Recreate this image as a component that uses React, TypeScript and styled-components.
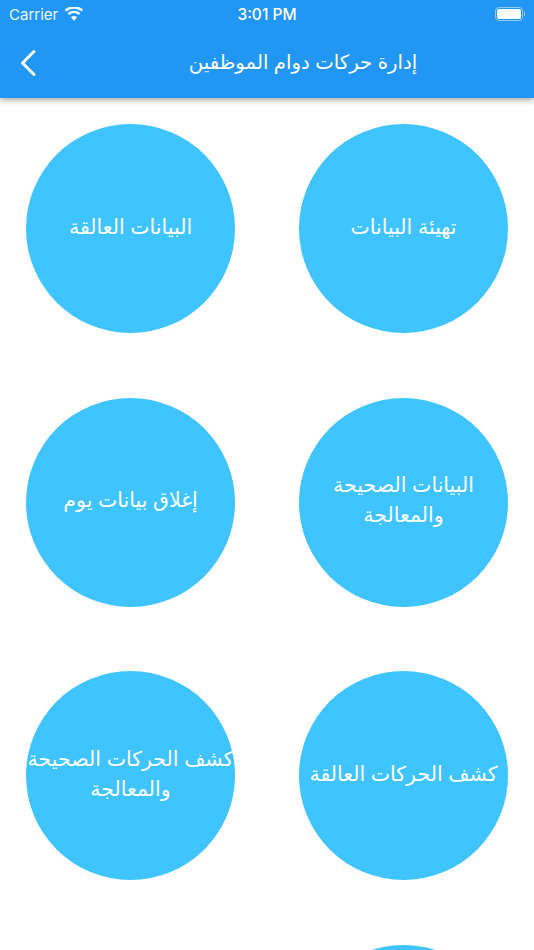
import React from 'react';
import styled, {createGlobalStyle} from "styled-components";

const items = [
    'تهيئة البيانات',
    'البيانات العالقة',
    'البيانات الصحيحة\nوالمعالجة',
    'إغلاق بيانات يوم',
    'كشف الحركات العالقة',
    'كشف الحركات الصحيحة\nوالمعالجة',
    '',
];

export default function App() {
    return (
        <Screen>
            <GlobalStyle/>
            <Header>
                <StatusBar>
                    <Carrier>
                        Carrier
                        <svg width="20" height="15" viewBox="0 0 20 14">
                            <path fill="#fff" d="M10 13.5 6.9 9.6a5 5 0 0 1 6.2 0L10 13.5zM5.2 7.5 3.6 5.5a10.2 10.2 0 0 1 12.8 0l-1.6 2a7.7 7.7 0 0 0-9.6 0zM2.4 4 .8 2a14.7 14.7 0 0 1 18.4 0l-1.6 2a12.2 12.2 0 0 0-15.2 0z"/>
                        </svg>
                    </Carrier>
                    <Time>3:01 PM</Time>
                    <BatteryWrap>
                        <Battery><BatteryFill/></Battery>
                        <BatteryNub/>
                    </BatteryWrap>
                </StatusBar>
                <TitleBar>
                    <BackButton>
                        <svg width="18" height="28" viewBox="0 0 18 28">
                            <path d="M15 2.5 3.5 14 15 25.5" fill="none" stroke="#fff" strokeWidth="3" strokeLinecap="round" strokeLinejoin="round"/>
                        </svg>
                    </BackButton>
                    <Title>إدارة حركات دوام الموظفين</Title>
                </TitleBar>
            </Header>
            <Grid>
                {items.map((text, i) => (
                    <Circle key={i}>{text}</Circle>
                ))}
            </Grid>
        </Screen>
    );
}

const GlobalStyle = createGlobalStyle`
  html, body {
    margin: 0;
    padding: 0;
    background: #fff;
  }
`
const Screen = styled.div`
  width: 534px;
  height: 950px;
  overflow: hidden;
  font-family: "Liberation Sans", "DejaVu Sans", sans-serif;
`
const Header = styled.header`
  height: 98px;
  background: #2196f3;
  box-shadow: 0 2px 6px rgba(0, 0, 0, 0.35);
  color: #fff;
  position: relative;
`
const StatusBar = styled.div`
  height: 28px;
  padding: 0 9px;
  display: grid;
  grid-template-columns: 1fr auto 1fr;
  align-items: center;
  font-family: Inter, "Liberation Sans", sans-serif;
  font-size: 15px;
`
const Carrier = styled.div`
  display: flex;
  align-items: center;
  gap: 6px;
  opacity: 0.92;
`
const Time = styled.div`
  font-weight: 500;
  font-size: 15.5px;
`
const BatteryWrap = styled.div`
  display: flex;
  align-items: center;
  justify-content: flex-end;
  gap: 1px;
`
const Battery = styled.div`
  width: 24px;
  height: 10px;
  border: 1px solid rgba(255, 255, 255, 0.5);
  border-radius: 4px;
  padding: 1px;
`
const BatteryFill = styled.div`
  width: 100%;
  height: 100%;
  background: #fff;
  border-radius: 2px;
`
const BatteryNub = styled.div`
  width: 1px;
  height: 4px;
  background: rgba(255, 255, 255, 0.5);
`
const TitleBar = styled.div`
  height: 70px;
  display: flex;
  align-items: center;
`
const BackButton = styled.div`
  flex: 0 0 72px;
  padding: 3px 0 0 19px;
  box-sizing: border-box;
  height: 34px;
`
const Title = styled.h1`
  flex: 1;
  margin: 0 0 2px;
  font-size: 19.7px;
  font-weight: 400;
  direction: rtl;
  text-align: center;
`
const Grid = styled.div`
  direction: rtl;
  display: grid;
  grid-template-columns: 209px 209px;
  column-gap: 64px;
  row-gap: 64.67px;
  padding-top: 26px;
  justify-content: center;
`
const Circle = styled.div`
  width: 209px;
  height: 209px;
  padding-bottom: 4px;
  box-sizing: border-box;
  border-radius: 50%;
  background: #40c4ff;
  color: #fff;
  display: flex;
  align-items: center;
  justify-content: center;
  text-align: center;
  font-size: 20.5px;
  line-height: 30px;
  white-space: pre;
`
